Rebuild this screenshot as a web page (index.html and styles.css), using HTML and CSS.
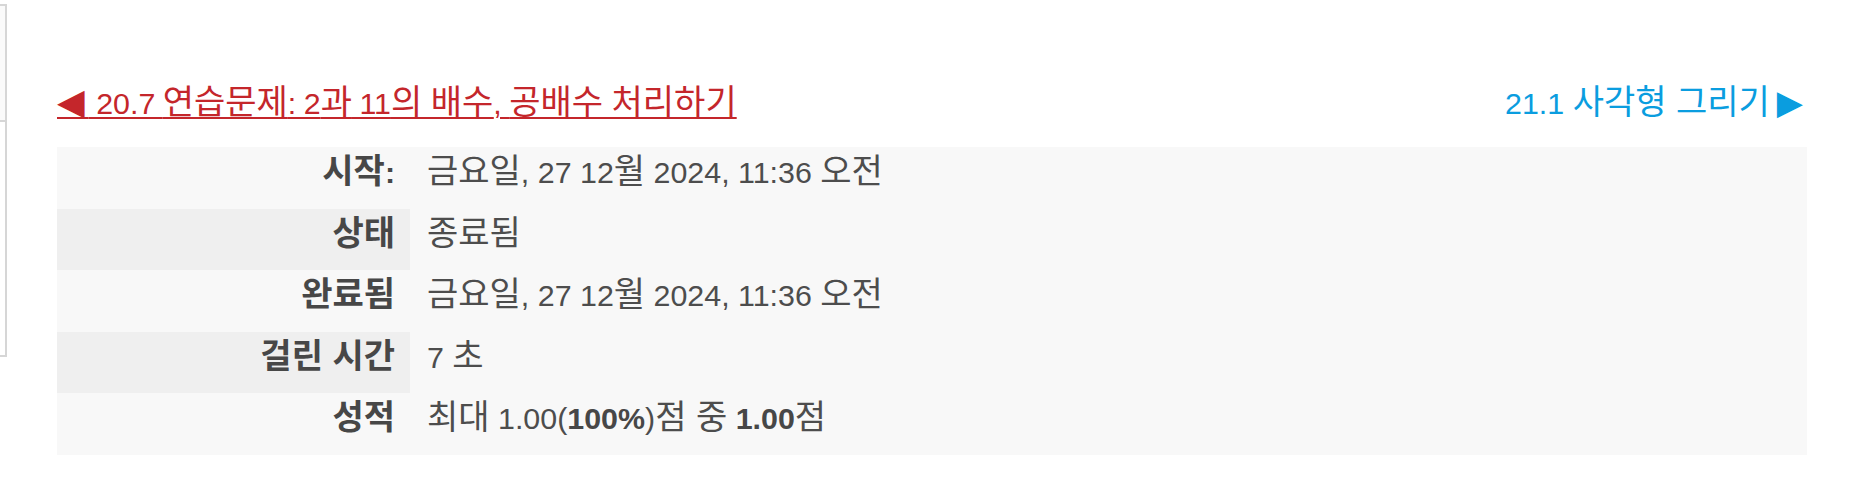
FILE: index.html
```html
<!DOCTYPE html>
<html lang="ko">
<head>
<meta charset="utf-8">
<title>퀴즈 검토</title>
<link rel="stylesheet" href="styles.css">
</head>
<body>
<div class="page">
  <aside class="sidebar">
    <div class="sb-top"></div>
    <div class="sb-bottom"></div>
  </aside>
  <main class="main">
    <nav class="nav">
      <a class="prev" href="#"><span class="tri tri-left">◀</span> 20.7 <span class="ko">연습문제</span>: 2<span class="ko">과</span> 11<span class="ko">의 배수</span>, <span class="ko">공배수 처리하기</span></a>
      <a class="next" href="#">21.1 <span class="ko">사각형 그리기</span><span class="tri tri-right">▶</span></a>
    </nav>
    <div class="summary">
      <div class="label"><span class="ko">시작</span>:</div>
      <div class="value"><span class="ko">금요일</span>, 27 12<span class="ko">월</span> 2024, 11:36 <span class="ko">오전</span></div>
      <div class="label alt"><span class="ko">상태</span></div>
      <div class="value"><span class="ko">종료됨</span></div>
      <div class="label"><span class="ko">완료됨</span></div>
      <div class="value"><span class="ko">금요일</span>, 27 12<span class="ko">월</span> 2024, 11:36 <span class="ko">오전</span></div>
      <div class="label alt"><span class="ko">걸린 시간</span></div>
      <div class="value">7 <span class="ko">초</span></div>
      <div class="label"><span class="ko">성적</span></div>
      <div class="value"><span class="ko">최대</span> 1.00(<b>100%</b>)<span class="ko">점 중</span> <b>1.00</b><span class="ko">점</span></div>
    </div>
  </main>
</div>
</body>
</html>
```
FILE: styles.css
```css
html, body {
  margin: 0;
  padding: 0;
  background: #ffffff;
}
body {
  font-family: "Liberation Sans", Arial, "Noto Sans CJK KR", sans-serif;
  font-size: 30.4px;
  color: #4d4d4d;
}
.ko {
  font-family: "Noto Sans CJK KR", sans-serif;
  font-size: 34px;
  line-height: 0;
}
.page {
  display: flex;
  align-items: flex-start;
}
.sidebar {
  width: 5px;
  margin-top: 4px;
  border-top: 2px solid #d6d6d6;
  border-right: 2px solid #d6d6d6;
  border-bottom: 2px solid #d6d6d6;
  display: flex;
  flex-direction: column;
}
.sb-top {
  height: 114px;
  background: #fafafa;
  border-bottom: 2px solid #d6d6d6;
}
.sb-bottom {
  height: 233px;
  background: #ffffff;
}
.main {
  margin-left: 50px;
  width: 1750px;
  padding-top: 85px;
}
.nav {
  display: flex;
  justify-content: space-between;
  line-height: 36px;
  height: 36px;
}
.nav a {
  text-decoration: underline;
  text-decoration-thickness: 2px;
  text-underline-offset: 3px;
}
.prev {
  color: #c4262b;
  word-spacing: -1px;
}
.next {
  color: #0a9ddf;
  text-decoration: none !important;
  margin-right: 4px;
}
.tri {
  font-family: "DejaVu Sans", sans-serif;
  font-size: 36px;
  line-height: 0;
}
.tri-left {
  letter-spacing: 4px;
}
.tri-right {
  margin-left: 7px;
  font-size: 34px;
}
.summary {
  margin-top: 26px;
  display: grid;
  grid-template-columns: 353px 1fr;
  grid-auto-rows: 61.6px;
  background: #f8f8f8;
  line-height: 36px;
}
.label {
  font-weight: bold;
  text-align: right;
  padding: 7px 15px 0 0;
  color: #474747;
}
.label.alt {
  background: #efefef;
}
.value {
  padding: 7px 0 0 17px;
}
.value b {
  color: #474747;
}
```
